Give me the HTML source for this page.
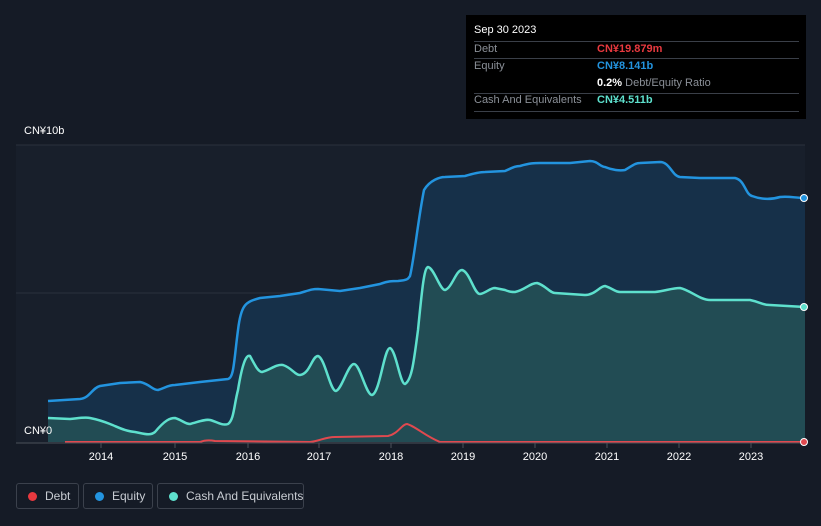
<!DOCTYPE html><html><head><style>
body{margin:0;width:821px;height:526px;background:#151b26;font-family:"Liberation Sans",sans-serif;position:relative;overflow:hidden}
.t{position:absolute;font-size:11px;color:#fff}
.tip{position:absolute;left:466px;top:15px;width:340px;height:104px;background:#000;}
.tip div{position:absolute;font-size:11px;white-space:nowrap}
.ln{position:absolute;left:8px;width:325px;height:1px;background:#3a3f48}
.leg{position:absolute;top:483px;height:26px;border:1px solid #3b414c;border-radius:3px;color:#c8ccd2;font-size:12px;line-height:24px;box-sizing:border-box;white-space:nowrap}
.leg i{position:absolute;left:11px;top:8px;width:9px;height:9px;border-radius:50%}
.leg span{position:absolute;left:28px}
</style></head><body>
<svg width="821" height="526" style="position:absolute;left:0;top:0">
<rect x="16" y="145" width="789" height="298" fill="#181f2b"/>
<line x1="16" y1="145" x2="805" y2="145" stroke="#2a313c"/>
<line x1="16" y1="293" x2="805" y2="293" stroke="#2a313c"/>
<path d="M48,401 L80,399 C90,398 92,388 100,386 L120,383 L140,382 C150,384 152,390 158,390 C165,388 168,385 175,385 L200,382 L228,379 C234,378 234,360 238,330 C241,305 245,302 260,298 L280,296 L300,293 C310,290 312,289 318,289 L340,291 L360,288 L380,284 C388,281 392,281 398,281 C408,280 408,279 410,276 C414,260 418,220 424,190 C430,180 440,177 445,177 L465,176 C475,173 480,172 485,172 L505,171 C512,168 515,166 520,166 C530,163 535,163 540,163 L570,163 L590,161 C598,161 600,167 605,167 C612,170 620,171 625,170 C632,166 635,163 640,163 L660,162 C670,162 672,176 680,177 L700,178 L735,178 C745,180 745,194 752,196 C760,199 770,200 780,197 C790,196 795,198 805,198 L805,442 L48,442 Z" fill="#163049"/>
<path d="M48,418 L70,419 C80,418 85,417 90,418 C100,420 105,422 110,424 C120,428 125,431 135,432 C145,434 150,436 155,432 C165,420 170,418 175,418 C182,420 185,424 190,424 C198,422 205,419 210,420 C218,422 222,426 228,424 C234,420 234,405 238,390 C242,365 246,354 250,356 C255,365 258,372 262,372 C270,370 276,364 283,365 C292,368 295,375 300,375 C310,374 312,356 318,356 C325,358 330,391 336,391 C342,389 348,364 354,364 C360,364 366,395 372,395 C380,393 384,348 390,348 C396,350 400,384 405,384 C412,380 414,360 418,330 C422,290 424,268 428,267 C434,268 440,290 445,290 C452,288 456,270 462,270 C470,272 474,294 480,294 C486,293 490,288 495,288 L505,290 C510,292 512,292 515,292 C525,290 530,283 537,283 C545,285 550,293 555,293 L585,295 C595,295 600,286 605,286 C612,288 615,292 620,292 L655,292 C665,291 672,288 680,288 C690,290 700,300 710,300 L750,300 C760,302 762,305 770,305 L805,307 L805,442 L48,442 Z" fill="#224c54"/>
<path d="M48,401 L80,399 C90,398 92,388 100,386 L120,383 L140,382 C150,384 152,390 158,390 C165,388 168,385 175,385 L200,382 L228,379 C234,378 234,360 238,330 C241,305 245,302 260,298 L280,296 L300,293 C310,290 312,289 318,289 L340,291 L360,288 L380,284 C388,281 392,281 398,281 C408,280 408,279 410,276 C414,260 418,220 424,190 C430,180 440,177 445,177 L465,176 C475,173 480,172 485,172 L505,171 C512,168 515,166 520,166 C530,163 535,163 540,163 L570,163 L590,161 C598,161 600,167 605,167 C612,170 620,171 625,170 C632,166 635,163 640,163 L660,162 C670,162 672,176 680,177 L700,178 L735,178 C745,180 745,194 752,196 C760,199 770,200 780,197 C790,196 795,198 805,198" fill="none" stroke="#2394df" stroke-width="2.5"/>
<path d="M48,418 L70,419 C80,418 85,417 90,418 C100,420 105,422 110,424 C120,428 125,431 135,432 C145,434 150,436 155,432 C165,420 170,418 175,418 C182,420 185,424 190,424 C198,422 205,419 210,420 C218,422 222,426 228,424 C234,420 234,405 238,390 C242,365 246,354 250,356 C255,365 258,372 262,372 C270,370 276,364 283,365 C292,368 295,375 300,375 C310,374 312,356 318,356 C325,358 330,391 336,391 C342,389 348,364 354,364 C360,364 366,395 372,395 C380,393 384,348 390,348 C396,350 400,384 405,384 C412,380 414,360 418,330 C422,290 424,268 428,267 C434,268 440,290 445,290 C452,288 456,270 462,270 C470,272 474,294 480,294 C486,293 490,288 495,288 L505,290 C510,292 512,292 515,292 C525,290 530,283 537,283 C545,285 550,293 555,293 L585,295 C595,295 600,286 605,286 C612,288 615,292 620,292 L655,292 C665,291 672,288 680,288 C690,290 700,300 710,300 L750,300 C760,302 762,305 770,305 L805,307" fill="none" stroke="#5ee0cd" stroke-width="2.5"/>
<path d="M65,442 L200,442 C205,440 210,440 215,441 L310,442 C320,441 325,437 335,437 L388,436 C398,434 402,424 407,424 C415,426 425,436 440,442 L805,442" fill="none" stroke="#e0494f" stroke-width="2"/>
<line x1="16" y1="443" x2="805" y2="443" stroke="#4a505a"/>
<g stroke="#4a505a"><line x1="101" y1="443" x2="101" y2="448"/><line x1="175" y1="443" x2="175" y2="448"/><line x1="248" y1="443" x2="248" y2="448"/><line x1="319" y1="443" x2="319" y2="448"/><line x1="391" y1="443" x2="391" y2="448"/><line x1="463" y1="443" x2="463" y2="448"/><line x1="535" y1="443" x2="535" y2="448"/><line x1="607" y1="443" x2="607" y2="448"/><line x1="679" y1="443" x2="679" y2="448"/><line x1="751" y1="443" x2="751" y2="448"/></g>
<circle cx="804" cy="198" r="3.5" fill="#2394df" stroke="#fff" stroke-width="1"/>
<circle cx="804" cy="307" r="3.5" fill="#5ee0cd" stroke="#fff" stroke-width="1"/>
<circle cx="804" cy="442" r="3.5" fill="#e0494f" stroke="#fff" stroke-width="1"/>
<g fill="#fff" font-size="11" text-anchor="middle" font-family="Liberation Sans"><text x="101" y="460">2014</text><text x="175" y="460">2015</text><text x="248" y="460">2016</text><text x="319" y="460">2017</text><text x="391" y="460">2018</text><text x="463" y="460">2019</text><text x="535" y="460">2020</text><text x="607" y="460">2021</text><text x="679" y="460">2022</text><text x="751" y="460">2023</text></g>
</svg>
<div class="t" style="left:24px;top:125px">CN¥10b</div>
<div class="t" style="left:24px;top:425px">CN¥0</div>
<div class="tip">
<div style="left:8px;top:9px;color:#fff">Sep 30 2023</div>
<div class="ln" style="top:26px"></div>
<div style="left:8px;top:28px;color:#8b9098">Debt</div><div style="left:131px;top:28px;color:#e8393f;font-weight:bold">CN¥19.879m</div>
<div class="ln" style="top:43px"></div>
<div style="left:8px;top:45px;color:#8b9098">Equity</div><div style="left:131px;top:45px;color:#2394df;font-weight:bold">CN¥8.141b</div>
<div style="left:131px;top:62px;color:#8b9098"><b style="color:#fff">0.2%</b> Debt/Equity Ratio</div>
<div class="ln" style="top:78px"></div>
<div style="left:8px;top:79px;color:#8b9098">Cash And Equivalents</div><div style="left:131px;top:79px;color:#5ee0cd;font-weight:bold">CN¥4.511b</div>
<div class="ln" style="top:96px"></div>
</div>
<div class="leg" style="left:16px;width:63px"><i style="background:#e8393f"></i><span>Debt</span></div>
<div class="leg" style="left:83px;width:70px"><i style="background:#2394df"></i><span>Equity</span></div>
<div class="leg" style="left:157px;width:147px"><i style="background:#5ee0cd"></i><span>Cash And Equivalents</span></div>
</body></html>
